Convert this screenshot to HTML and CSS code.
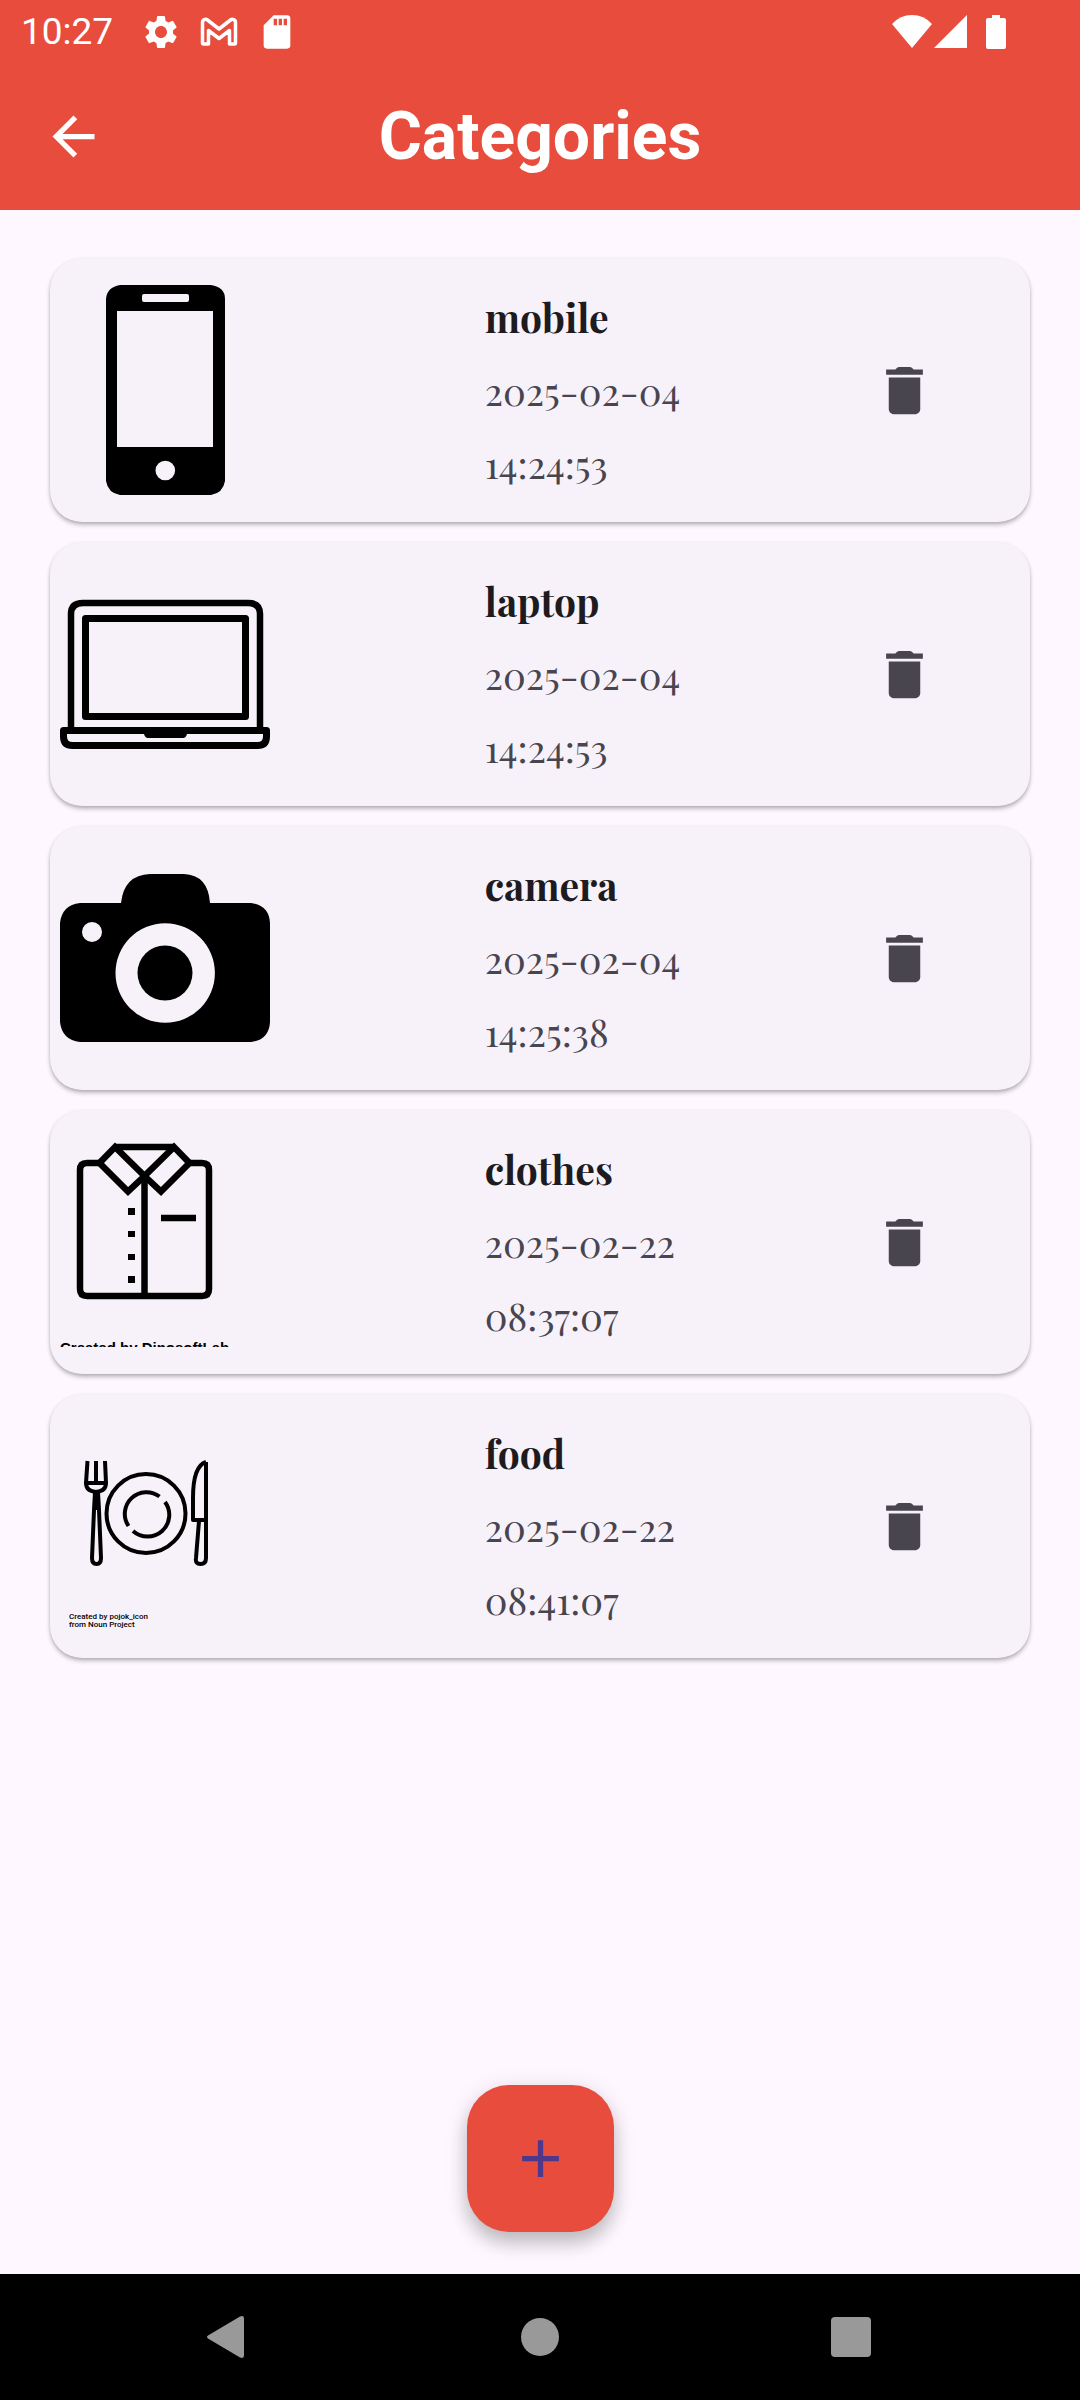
FILE: index.html
```html
<!DOCTYPE html>
<html lang="en">
<head>
<meta charset="utf-8">
<meta name="viewport" content="width=device-width, initial-scale=1">
<title>Categories</title>
<link rel="stylesheet" href="styles.css">
</head>
<body>
<svg class="sprite" aria-hidden="true">
  <symbol id="trash" viewBox="0 0 24 24"><path d="M6 19c0 1.100.9 2 2 2h8c1.100 0 2-.9 2-2V7H6zM19 4h-3.500l-.7-.7q-.3-.3-.8-.3h-4q-.5 0-.8.3l-.7.7H5v2h14z"/></symbol>
</svg>

<header class="top">
  <div class="status">
    <span class="clock">10:27</span>
    <div class="notices">
      <svg class="notice" viewBox="0 0 24 24" aria-hidden="true"><path d="M19.140 12.940c.04-.3.06-.61.06-.94 0-.32-.02-.64-.07-.94l2.030-1.580c.18-.14.23-.41.12-.61l-1.920-3.320c-.12-.22-.37-.29-.59-.22l-2.390.96c-.5-.38-1.030-.7-1.620-.94l-.36-2.540c-.04-.24-.24-.41-.48-.41h-3.840c-.24 0-.43.17-.47.41l-.36 2.540c-.59.24-1.130.57-1.620.94l-2.390-.96c-.22-.08-.47 0-.59.22L2.740 8.870c-.12.21-.08.47.12.61l2.030 1.580c-.05.3-.09.63-.09.94s.02.64.07.94l-2.030 1.580c-.18.14-.23.41-.12.61l1.920 3.320c.12.22.37.29.59.22l2.390-.96c.5.38 1.030.7 1.620.94l.36 2.540c.05.24.24.41.48.41h3.840c.24 0 .44-.17.47-.41l.36-2.540c.59-.24 1.130-.56 1.620-.94l2.390.96c.22.08.47 0 .59-.22l1.920-3.320c.12-.22.07-.47-.12-.61zM12 15.600c-1.980 0-3.600-1.620-3.600-3.600s1.620-3.600 3.600-3.600 3.600 1.620 3.600 3.600-1.620 3.600-3.600 3.600z"/></svg>
      <svg class="notice" viewBox="0 0 40 40" aria-hidden="true"><path fill="none" stroke="#fff" stroke-width="3.500" stroke-linejoin="round" d="M3.500 31V10.500c0-3 3-4 5-2.500L20 17 31.500 8c2-1.500 5-.5 5 2.500V31q0 1-1 1h-5V18.500L20 26.500 9.500 18.500V32h-5q-1 0-1-1z"/></svg>
      <svg class="notice" viewBox="0 0 24 24" aria-hidden="true"><path d="M18 2h-8L4 8v12q0 2 2 2h12q2 0 2-2V4q0-2-2-2zm-6 6h-2V4h2zm3 0h-2V4h2zm3 0h-2V4h2z"/></svg>
    </div>
    <div class="signals">
      <svg width="40" height="34" viewBox="0 0 40 34" aria-hidden="true"><path d="M0 9Q8 0 20 0T40 9L20 33z"/></svg>
      <svg width="33" height="34" viewBox="0 0 33 34" aria-hidden="true"><path d="M33 0V33H0z"/></svg>
      <svg class="battery" width="20" height="34" viewBox="0 0 20 34" aria-hidden="true"><path d="M6 0h8v3h4q2 0 2 2v27q0 2-2 2H2q-2 0-2-2V5q0-2 2-2h4z"/></svg>
    </div>
  </div>
  <div class="appbar">
    <button class="icon-button" type="button" aria-label="Back">
      <svg class="icon" viewBox="0 0 24 24"><path d="M20 11H7.830l5.590-5.590L12 4l-8 8 8 8 1.410-1.410L7.830 13H20z"/></svg>
    </button>
    <h1 class="title">Categories</h1>
  </div>
</header>

<main class="content">
  <ul class="list">
    <li class="card">
      <svg class="thumb" viewBox="0 0 210 210" role="img" aria-label="Phone">
        <path fill-rule="evenodd" d="M60 0h91q14 2 14 14v182q-2 12-14 14H60q-12-2-14-14V14Q47 2 60 0zM84 9q-2 0-2 2v4q0 2 2 2h43q2 0 2-2v-4q0-2-2-2zM57 26v136h96V26zM95.500 185.500a9.800 9.800 0 1 0 19.600 0a9.800 9.800 0 1 0-19.600 0z"/>
      </svg>
      <div class="details">
        <h2 class="name">mobile</h2>
        <p class="stamp">2025-02-04</p>
        <p class="stamp">14:24:53</p>
      </div>
      <button class="icon-button delete" type="button" aria-label="Delete mobile"><svg class="icon"><use href="#trash"/></svg></button>
    </li>
    <li class="card">
      <svg class="thumb" viewBox="0 0 210 210" role="img" aria-label="Laptop">
        <g fill="none" stroke="#000" stroke-width="7" stroke-linejoin="round">
          <path stroke-width="6.500" d="M11 160V45q0-11 12-11h165q12 0 12 11v115"/>
          <path d="M25.500 49.500h160v98h-160zM3.500 161.500h203v6q0 9-9 9h-185q-9 0-9-9z"/>
        </g>
        <path d="M84 160h43v5q-1 4-4 4H88q-3 0-4-4z"/>
      </svg>
      <div class="details">
        <h2 class="name">laptop</h2>
        <p class="stamp">2025-02-04</p>
        <p class="stamp">14:24:53</p>
      </div>
      <button class="icon-button delete" type="button" aria-label="Delete laptop"><svg class="icon"><use href="#trash"/></svg></button>
    </li>
    <li class="card">
      <svg class="thumb" viewBox="0 0 210 210" role="img" aria-label="Camera">
        <path fill-rule="evenodd" d="M20 50h41q3-28 29-29h34q24 1 26 29h41q18 2 19 20v99q-1 18-19 20H20Q2 187 0 169V70Q2 52 20 50zM55.500 120a49.700 49.700 0 1 0 99.400 0a49.700 49.700 0 1 0-99.400 0zM22 79a10 10 0 1 0 20 0a10 10 0 1 0-20 0z"/>
        <circle cx="105" cy="120" r="27.500"/>
      </svg>
      <div class="details">
        <h2 class="name">camera</h2>
        <p class="stamp">2025-02-04</p>
        <p class="stamp">14:25:38</p>
      </div>
      <button class="icon-button delete" type="button" aria-label="Delete camera"><svg class="icon"><use href="#trash"/></svg></button>
    </li>
    <li class="card">
      <svg class="thumb" viewBox="0 0 210 210" role="img" aria-label="Shirt">
        <g fill="none" stroke="#000" stroke-width="6.500">
          <path d="M40 26H27q-7 0-7 7v119q0 7 7 7h115q7 0 7-7V33q0-7-7-7h-13M84.500 39v120M55 10h60M101 81h35"/>
          <path d="M55 10L84.500 39 68 54.500 39.500 26zM114 10L84.500 39 101 54.500 129.500 26z"/>
        </g>
        <path d="M68 71h7v7h-7zM68 94h7v6h-7zM68 117h7v6h-7zM68 139h7v7h-7z"/>
        <text class="credit" x="0" y="216">Created by DinosoftLab</text>
      </svg>
      <div class="details">
        <h2 class="name">clothes</h2>
        <p class="stamp">2025-02-22</p>
        <p class="stamp">08:37:07</p>
      </div>
      <button class="icon-button delete" type="button" aria-label="Delete clothes"><svg class="icon"><use href="#trash"/></svg></button>
    </li>
    <li class="card">
      <svg class="thumb" viewBox="0 0 210 210" role="img" aria-label="Plate with fork and knife">
        <g fill="none" stroke="#000" stroke-width="4" stroke-linejoin="round">
          <path d="M27.500 40L26 62q0 8 10 9 10-1 10-9L45 40M36 40v22M26 62h20M35 71l-1 18-2 48q0 6 4.500 6t4.500-6l-2-48-1-18zM36.500 70v19"/>
          <circle cx="86" cy="92.500" r="39.500"/>
          <path d="M99.500 75.500A21.700 21.700 0 0 0 68.500 105M105 81A21.700 21.700 0 0 1 73 110"/>
          <path d="M146 41v96q0 6-5.500 6t-4.500-6l3-37M146 99h-13V77q0-32 13-36"/>
        </g>
        <text class="credit small" x="9" y="198">Created by pojok_icon</text>
        <text class="credit small" x="9" y="206">from Noun Project</text>
      </svg>
      <div class="details">
        <h2 class="name">food</h2>
        <p class="stamp">2025-02-22</p>
        <p class="stamp">08:41:07</p>
      </div>
      <button class="icon-button delete" type="button" aria-label="Delete food"><svg class="icon"><use href="#trash"/></svg></button>
    </li>
  </ul>
  <button class="fab" type="button" aria-label="Add category">
    <svg class="icon" viewBox="0 0 24 24"><path d="M19 13h-6v6h-2v-6H5v-2h6V5h2v6h6z"/></svg>
  </button>
</main>

<nav class="system" aria-label="System">
  <button class="key" type="button" aria-label="Back"><svg class="glyph" viewBox="0 0 48 48"><path d="M3 22.500L35 3.500q4-1.500 4 2v37q0 3.500-4 2L3 25.500q-2-1.500 0-3z"/></svg></button>
  <button class="key" type="button" aria-label="Home"><svg class="glyph" viewBox="0 0 48 48"><circle cx="24" cy="24" r="19"/></svg></button>
  <button class="key" type="button" aria-label="Recent apps"><svg class="glyph" viewBox="0 0 48 48"><rect x="4" y="4" width="40" height="40" rx="4"/></svg></button>
</nav>
</body>
</html>
```
FILE: styles.css
```css
* {
  box-sizing: border-box;
}

body {
  margin: 0;
  min-height: 100vh;
  display: flex;
  flex-direction: column;
  background: #fef7ff;
  font-family: Roboto, sans-serif;
}

svg {
  display: block;
}

button {
  margin: 0;
  padding: 0;
  border: 0;
  background: none;
  color: inherit;
}

.sprite {
  position: absolute;
  width: 0;
  height: 0;
}

.top {
  background: #e74c3c;
  color: #fff;
  fill: #fff;
}

.status {
  height: 63px;
  padding: 0 74px 0 21px;
  display: flex;
  align-items: center;
  gap: 28px;
}

.clock {
  font-size: 37px;
  line-height: 63px;
}

.notices {
  display: flex;
  gap: 18px;
}

.notice {
  width: 40px;
  height: 40px;
}

.signals {
  margin-left: auto;
  display: flex;
  gap: 2px;
}

.battery {
  margin-left: 17px;
}

.appbar {
  height: 147px;
  padding: 0 42px;
  display: grid;
  grid-template-columns: 63px 1fr 63px;
  align-items: center;
}

.icon-button,
.icon {
  width: 63px;
  height: 63px;
}

.title {
  margin: 0;
  font-size: 66px;
  line-height: 80px;
  font-weight: 700;
  text-align: center;
}

.content {
  flex: 1;
  padding: 48px 50px 42px;
  display: flex;
  flex-direction: column;
  justify-content: space-between;
  align-items: center;
  gap: 48px;
}

.list {
  width: 100%;
  margin: 0;
  padding: 0;
  list-style: none;
  display: grid;
  gap: 20px;
}

.card {
  min-height: 264px;
  padding: 0 94px 0 10px;
  display: grid;
  grid-template-columns: 52fr 48fr auto;
  align-items: center;
  border-radius: 32px;
  background: #f7f2fa;
  box-shadow: 0 3px 4px rgba(0, 0, 0, 0.24), 0 1px 3px rgba(0, 0, 0, 0.1);
}

.thumb {
  width: 210px;
  height: 210px;
  overflow: hidden;
}

.credit {
  font-family: "Liberation Sans", sans-serif;
  font-size: 15px;
  font-weight: 700;
}

.small {
  font-family: Roboto, sans-serif;
  font-size: 8px;
  font-weight: 500;
}

.details {
  padding-left: 2px;
  font-family: "Playfair Display", "Liberation Serif", serif;
}

.name,
.stamp {
  margin: 0;
  line-height: 73px;
}

.name {
  font-size: 39px;
  font-weight: 700;
  color: #1d1b20;
}

.stamp {
  font-size: 38px;
  color: #49454f;
}

.delete {
  fill: #49454f;
}

.fab {
  width: 147px;
  height: 147px;
  display: grid;
  place-items: center;
  border-radius: 42px;
  background: #e74c3c;
  fill: #4f378b;
  box-shadow: 0 12px 18px rgba(0, 0, 0, 0.2), 0 3px 24px rgba(0, 0, 0, 0.1);
}

.system {
  height: 126px;
  padding: 0 73px;
  display: grid;
  grid-template-columns: repeat(3, 1fr);
  background: #000;
  fill: #999;
}

.key {
  display: grid;
  place-items: center;
}

.glyph {
  width: 48px;
  height: 48px;
}
```
